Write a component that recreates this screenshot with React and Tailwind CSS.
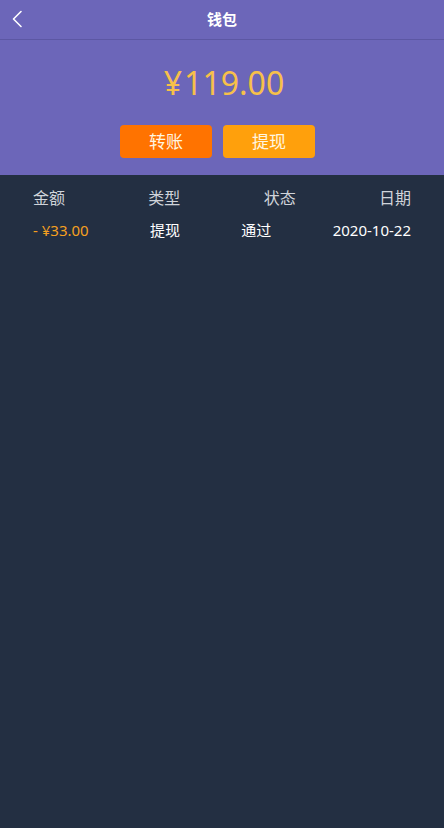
export default function App() {
  const font = { fontFamily: '"Noto Sans", "Noto Sans CJK SC", sans-serif' };
  return (
    <div className="w-[444px] h-[828px] bg-[#232f42] flex flex-col" style={font}>
      <div className="bg-[#6c66b9] h-[175px] flex flex-col">
        <div className="h-[40px] border-b border-[#5c57a3] flex items-center relative">
          <svg className="absolute left-[11px] top-[10px]" width="12" height="18" viewBox="0 0 12 18" fill="none">
            <path d="M10 1.5 L2.5 9 L10 16.5" stroke="#ffffff" strokeWidth="1.6" strokeLinecap="round" strokeLinejoin="round" />
          </svg>
          <div className="flex-1 text-center text-white text-[15px] font-bold">钱包</div>
        </div>
        <div className="flex justify-center mt-[21px] pl-[4px] text-[32px] leading-[44px] text-[#f7c04a]">
          <span className="mr-[2px]">¥</span>
          <span>119.00</span>
        </div>
        <div className="flex justify-center gap-[11px] mt-[20px] pr-[9px]">
          <div className="w-[92px] h-[33px] rounded-[4px] bg-[#ff7300] text-[#fff6e0] text-[17px] flex items-center justify-center">转账</div>
          <div className="w-[92px] h-[33px] rounded-[4px] bg-[#ffa00c] text-[#fff6e0] text-[17px] flex items-center justify-center">提现</div>
        </div>
      </div>
      <div className="flex justify-between px-[33px] mt-[11px] text-[16px] leading-[24px] text-[#d0d4da]">
        <span>金额</span>
        <span>类型</span>
        <span>状态</span>
        <span>日期</span>
      </div>
      <div className="flex justify-between px-[33px] mt-[9px] text-[15px] leading-[22px] text-white">
        <span className="text-[#f5a020]">- ¥33.00</span>
        <span>提现</span>
        <span>通过</span>
        <span>2020-10-22</span>
      </div>
    </div>
  );
}
